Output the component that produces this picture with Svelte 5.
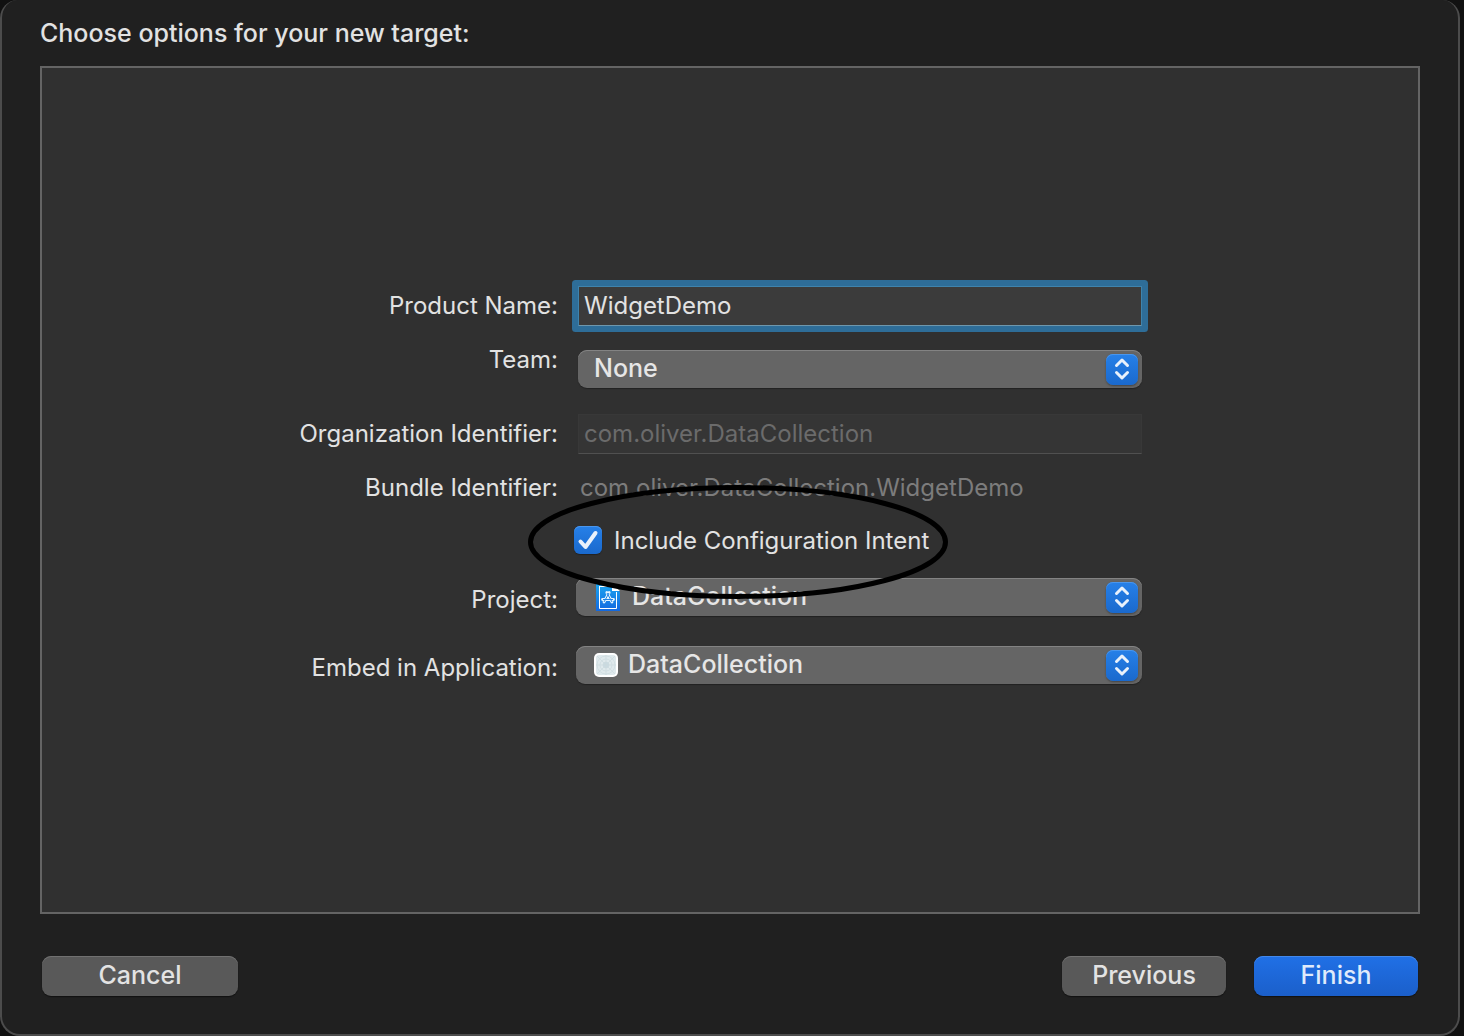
<script lang="ts">
  type Popup = {
    id: string;
    label: string;
    value: string;
    icon?: 'project' | 'app';
  };

  const team: Popup = { id: 'team', label: 'Team:', value: 'None' };

  const destinations: Popup[] = [
    { id: 'project', label: 'Project:', value: 'DataCollection', icon: 'project' },
    { id: 'embed', label: 'Embed in Application:', value: 'DataCollection', icon: 'app' },
  ];

  const organization = 'com.oliver.DataCollection';

  let productName = $state('WidgetDemo');
  let includeIntent = $state(true);

  const bundleId = $derived(`${organization}.${productName}`);
</script>

{#snippet popup(item: Popup)}
  <div class="popup popup--{item.id}">
    <select id={item.id} class="popup__select">
      <option>{item.value}</option>
    </select>
    {#if item.icon === 'project'}
      <svg class="popup__icon" viewBox="0 0 26 28" aria-hidden="true">
        <defs>
          <linearGradient id="doc" x1="0" y1="0" x2="0" y2="1">
            <stop offset="0" stop-color="#1ba4f0" />
            <stop offset="1" stop-color="#1268e0" />
          </linearGradient>
        </defs>
        <path d="M1 1h16l8 8v19H1z" fill="url(#doc)" />
        <path d="M4 3.500h14M4.500 3v22.500h17V9" fill="none" stroke="#fff" />
        <path d="M17 1v7h8z" fill="#fff" />
        <path
          d="M11.800 9.500l5.200 9.500M14.200 9.500L9 19M7.500 16.500h11"
          fill="none"
          stroke="#e4f4ff"
          stroke-width="2.8"
          stroke-linecap="round"
        />
        <path
          d="M12 10l5 9M14 10l-5 9M8 16.500h10"
          fill="none"
          stroke="#1c83e6"
          stroke-width="1"
        />
      </svg>
    {:else if item.icon === 'app'}
      <svg class="popup__icon" viewBox="0 0 26 28" aria-hidden="true">
        <rect x="1" y="2" width="24" height="24" rx="5" fill="#fff" />
        <rect x="3" y="4" width="20" height="20" rx="3" fill="#dfe9ec" />
        <g fill="none" stroke="#cbdade" stroke-width=".7">
          <circle cx="13" cy="14" r="9" />
          <circle cx="13" cy="14" r="6" />
          <circle cx="13" cy="14" r="3" fill="#cadbe2" />
          <path d="M4 5l18 18M22 5L4 23M13 4v20M3 14h20" />
        </g>
      </svg>
    {/if}
    <span class="popup__arrows" aria-hidden="true">
      <svg viewBox="0 0 32 32">
        <path d="M10.500 11.500L16 6l5.500 5.500M10.500 18.500L16 24l5.500-5.500" />
      </svg>
    </span>
  </div>
{/snippet}

<main class="sheet">
  <h1>Choose options for your new target:</h1>

  <form id="target" class="panel" onsubmit={(e) => e.preventDefault()}>
    <div class="row">
      <label for="product">Product Name:</label>
      <input id="product" class="field field--active" type="text" bind:value={productName} />
    </div>

    <div class="row row--team">
      <label for={team.id}>{team.label}</label>
      {@render popup(team)}
    </div>

    <div class="row">
      <label for="organization">Organization Identifier:</label>
      <input id="organization" class="field" type="text" value={organization} disabled />
    </div>

    <div class="row row--bundle">
      <label for="bundle">Bundle Identifier:</label>
      <output id="bundle">{bundleId}</output>
    </div>

    <div class="row">
      <div class="intent">
        <input id="intent" type="checkbox" bind:checked={includeIntent} />
        <label for="intent">Include Configuration Intent</label>
        {#if includeIntent}
          <svg class="intent__tick" viewBox="0 0 28 28" aria-hidden="true">
            <path d="M6.500 15.500l5 5.500L21.500 7" />
          </svg>
        {/if}
        <svg class="intent__ring" viewBox="0 0 420 116" aria-hidden="true">
          <ellipse cx="210" cy="58" rx="207.500" ry="54.500" />
        </svg>
      </div>
    </div>

    {#each destinations as item}
      <div class="row row--destination">
        <label for={item.id}>{item.label}</label>
        {@render popup(item)}
      </div>
    {/each}
  </form>

  <footer class="actions">
    <button type="button" class="button button--wide">Cancel</button>
    <div class="actions__right">
      <button type="button" class="button">Previous</button>
      <button type="submit" form="target" class="button button--primary">Finish</button>
    </div>
  </footer>
</main>

<style>
  :global(body) {
    background: #111;
  }

  .sheet,
  .sheet * {
    box-sizing: border-box;
  }

  .sheet {
    display: flex;
    flex-direction: column;
    min-height: 100vh;
    margin-right: 4px;
    padding: 0 38px 38px;
    border: 2px solid #4c4c4c;
    border-top: 0;
    border-radius: 18px 18px 20px 20px;
    background: #202020;
    color: #e2e2e2;
    font-family: Inter, 'Liberation Sans', sans-serif;
    font-size: 24px;
    line-height: 28px;
  }

  h1 {
    margin: 0;
    padding: 19px 0;
    font-size: 25px;
    font-weight: 500;
    line-height: 28px;
  }

  .panel {
    display: flex;
    flex: 1;
    flex-direction: column;
    gap: 24px;
    padding: 218px 276px 24px 0;
    border: 2px solid #646464;
    background: #303030;
  }

  .row {
    display: grid;
    grid-template-columns: 516fr 566fr;
    column-gap: 18px;
    align-items: center;
  }

  .row > label {
    text-align: right;
    white-space: nowrap;
  }

  .row--team {
    height: 40px;
    align-items: start;
    line-height: 20px;
  }

  .row--bundle {
    height: 24px;
    align-items: start;
    line-height: 20px;
  }

  .row--destination {
    height: 44px;
  }

  .row--destination .popup {
    align-self: start;
  }

  .field {
    width: auto;
    min-width: 0;
    height: 40px;
    margin-left: 2px;
    padding: 0 5px 2px;
    border: 1px solid #383838;
    border-bottom-color: #505050;
    outline: 0;
    background: #353535;
    color: #6b6b6b;
    font: inherit;
  }

  .field--active {
    border-color: #3f83ac;
    border-bottom-color: #6e97ad;
    border-radius: 1px;
    background: #3b3b3b;
    box-shadow: 0 0 0 6px #2e6d98;
    color: #e2e2e2;
  }

  output {
    padding-left: 4px;
    color: #7c7c7c;
    white-space: nowrap;
  }

  .popup {
    position: relative;
    height: 38px;
  }

  .popup--team {
    margin-left: 2px;
  }

  .popup__select {
    display: block;
    width: 100%;
    height: 100%;
    padding: 0 48px 2px 16px;
    border: 0;
    border-radius: 9px;
    appearance: none;
    background: #656565;
    box-shadow: inset 0 1px #838383, 0 1px 1px #222;
    color: #e6e6e6;
    font: inherit;
    font-size: 25px;
    font-weight: 500;
  }

  .popup--project .popup__select {
    padding-left: 56px;
  }

  .popup--embed .popup__select {
    padding-left: 52px;
  }

  .popup__icon {
    position: absolute;
    top: 5px;
    left: 17px;
    width: 26px;
    height: 28px;
    pointer-events: none;
  }

  .popup--project .popup__icon {
    left: 19px;
  }

  .popup__arrows {
    position: absolute;
    top: 4px;
    right: 4px;
    width: 32px;
    height: 31px;
    border-radius: 7px;
    background: linear-gradient(#2680e8, #1a69cd);
    box-shadow: inset 0 1px #4a96ed, 0 1px 2px #444;
    pointer-events: none;
  }

  .popup__arrows svg {
    display: block;
  }

  .popup__arrows path,
  .intent__tick path {
    fill: none;
    stroke: #e9f1fb;
    stroke-width: 3;
    stroke-linecap: round;
    stroke-linejoin: round;
  }

  .intent {
    position: relative;
    display: flex;
    grid-column: 2;
    gap: 12px;
    height: 28px;
    margin-left: -2px;
    line-height: 30px;
    white-space: nowrap;
  }

  .intent input {
    width: 28px;
    height: 28px;
    margin: 0;
    border-radius: 6px;
    appearance: none;
    background: #6a6a6a;
  }

  .intent input:checked {
    background: linear-gradient(#2680e8, #1a69cd);
    box-shadow: inset 0 1px #4a96ed, 0 1px 1px #222;
  }

  .intent__tick {
    position: absolute;
    top: 0;
    left: 0;
    width: 28px;
    height: 28px;
    pointer-events: none;
  }

  .intent__tick path {
    stroke-width: 4;
  }

  .intent__ring {
    position: absolute;
    z-index: 1;
    top: -42px;
    left: -46px;
    width: 420px;
    height: 116px;
    pointer-events: none;
  }

  .intent__ring ellipse {
    fill: none;
    stroke: #000;
    stroke-width: 5;
  }

  .actions {
    display: flex;
    justify-content: space-between;
    padding: 42px 2px 0;
  }

  .actions__right {
    display: flex;
    gap: 28px;
  }

  .button {
    width: 164px;
    height: 40px;
    padding: 0 0 2px;
    border: 0;
    border-radius: 9px;
    background: #595959;
    box-shadow: inset 0 1px #717171, 0 1px 1px #111;
    color: #e3e3e3;
    font: inherit;
    font-size: 25px;
    font-weight: 500;
  }

  .button--wide {
    width: 196px;
  }

  .button--primary {
    background: linear-gradient(#2070e6, #1b5fca);
    box-shadow: inset 0 1px #4388ea, 0 1px 1px #111;
    color: #dfeafb;
  }
</style>
